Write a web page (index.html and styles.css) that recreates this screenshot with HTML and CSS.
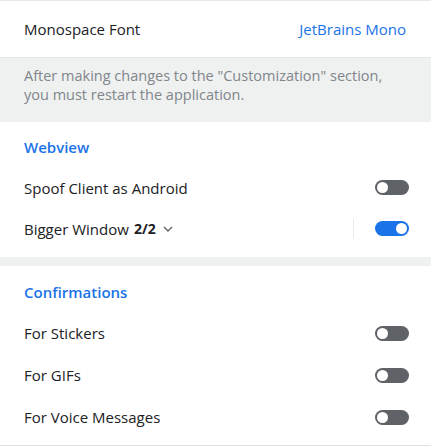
FILE: index.html
```html
<!DOCTYPE html>
<html>
<head>
<meta charset="utf-8">
<link rel="stylesheet" href="styles.css">
</head>
<body>
<div class="panel">
  <div class="row row-first">
    <span class="label">Monospace Font</span>
    <span class="value">JetBrains Mono</span>
  </div>
  <div class="note">After making changes to the "Customization" section,<br>you must restart the application.</div>
  <div class="section">
    <div class="section-title">Webview</div>
    <div class="row">
      <span class="label">Spoof Client as Android</span>
      <span class="toggle"></span>
    </div>
    <div class="row">
      <span class="label">Bigger Window <b class="count">2/2</b>
        <svg class="chev" width="10" height="6" viewBox="0 0 10 6"><path d="M1 1l4 4 4-4" fill="none" stroke="#5f6368" stroke-width="1.4"/></svg>
      </span>
      <span class="controls"><span class="vdiv"></span><span class="toggle on"></span></span>
    </div>
  </div>
  <div class="gap"></div>
  <div class="section section2">
    <div class="section-title">Confirmations</div>
    <div class="row">
      <span class="label">For Stickers</span>
      <span class="toggle"></span>
    </div>
    <div class="row">
      <span class="label">For GIFs</span>
      <span class="toggle"></span>
    </div>
    <div class="row">
      <span class="label">For Voice Messages</span>
      <span class="toggle"></span>
    </div>
  </div>
</div>
</body>
</html>
```
FILE: styles.css
```css
html, body {
  margin: 0;
  padding: 0;
  background: #fff;
}
body {
  font-family: "Open Sans", "Noto Sans", sans-serif;
  font-size: 15px;
  color: #202124;
}
.panel {
  width: 431px;
  height: 446px;
  box-sizing: border-box;
  border-top: 1px solid #e8e9e9;
  border-bottom: 1px solid #e0e1e1;
  overflow: hidden;
}
.row {
  display: flex;
  align-items: center;
  justify-content: space-between;
  height: 41px;
  padding: 0 22px 0 24px;
}
.row-first {
  height: 56px;
}
.label {
  display: flex;
  align-items: center;
  line-height: 20px;
}
.value {
  color: #1a73e8;
  margin-right: 3px;
}
.note {
  background: #eff0f0;
  border-top: 1px solid #e6e7e7;
  color: #80868b;
  font-size: 14.5px;
  line-height: 19px;
  padding: 8px 24px 18px;
}
.section {
  padding: 15px 0 8px;
}
.section2 {
  padding-top: 16px;
}
.section-title {
  color: #1a73e8;
  font-weight: 600;
  line-height: 20px;
  padding: 0 24px 10px;
}
.section2 .row {
  height: 42px;
}
.count {
  font-weight: 700;
  font-size: 14px;
  margin-left: 5px;
}
.chev {
  margin-left: 7px;
  margin-top: 1px;
}
.controls {
  display: flex;
  align-items: center;
}
.vdiv {
  width: 1px;
  height: 20px;
  background: #e8eaed;
  margin-right: 21px;
}
.toggle {
  position: relative;
  width: 34px;
  height: 15px;
  border-radius: 8px;
  background: #5f6368;
}
.toggle::after {
  content: "";
  position: absolute;
  top: 2px;
  left: 2px;
  width: 11px;
  height: 11px;
  border-radius: 50%;
  background: #fff;
}
.toggle.on {
  background: #1a73e8;
}
.toggle.on::after {
  left: auto;
  right: 2px;
}
.gap {
  height: 9px;
  background: #eff0f0;
}
```
